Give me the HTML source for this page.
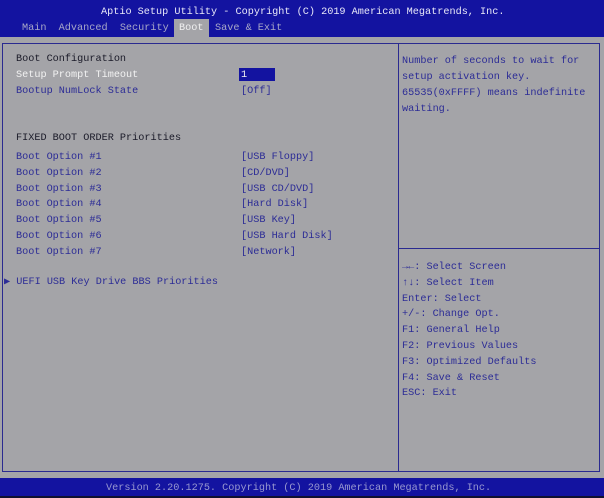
<!DOCTYPE html><html><head><style>
body{margin:0;width:604px;height:498px;background:#a4a4a8;position:relative;overflow:hidden;font-family:"Liberation Mono","DejaVu Sans Mono",monospace;font-size:10.2px;}
.t{position:absolute;white-space:pre;line-height:12px}
.b{color:#2c2c96}.k{color:#1a1a28}.w{color:#f2f2f2}
</style></head><body>
<div style="position:absolute;left:0;top:0;width:604px;height:37px;background:#1313a0"></div>
<div class="t" style="left:101px;top:7px;color:#e8e8f8">Aptio Setup Utility - Copyright (C) 2019 American Megatrends, Inc.</div>
<div class="t" style="left:22px;top:23px;color:#a8a8c8">Main  Advanced  Security</div>
<div style="position:absolute;left:174px;top:19px;width:35px;height:18px;background:#a4a4a8"></div>
<div class="t" style="left:179px;top:23px;color:#f0f0f0">Boot</div>
<div class="t" style="left:215px;top:23px;color:#a8a8c8">Save &amp; Exit</div>
<div style="position:absolute;left:2px;top:43px;width:596px;height:427px;border:1px solid #2a2a90"></div>
<div style="position:absolute;left:398px;top:43px;width:1px;height:428px;background:#2a2a90"></div>
<div style="position:absolute;left:399px;top:248px;width:200px;height:1px;background:#2a2a90"></div>
<div style="position:absolute;left:0;top:478px;width:604px;height:18px;background:#1313a0"></div>
<div style="position:absolute;left:0;top:496px;width:604px;height:2px;background:#101030"></div>
<div class="t" style="left:106px;top:483px;color:#9898d0">Version 2.20.1275. Copyright (C) 2019 American Megatrends, Inc.</div>
<div class="t k" style="left:16px;top:54px">Boot Configuration</div>
<div class="t w" style="left:16px;top:70px">Setup Prompt Timeout</div>
<div style="position:absolute;left:239px;top:68px;width:36px;height:13px;background:#1313a0"></div>
<div class="t w" style="left:241px;top:70px">1</div>
<div class="t b" style="left:16px;top:86px">Bootup NumLock State</div>
<div class="t b" style="left:241px;top:86px">[Off]</div>
<div class="t k" style="left:16px;top:133px">FIXED BOOT ORDER Priorities</div>
<div class="t b" style="left:16px;top:150px;line-height:15.75px">Boot Option #1
Boot Option #2
Boot Option #3
Boot Option #4
Boot Option #5
Boot Option #6
Boot Option #7</div>
<div class="t b" style="left:241px;top:150px;line-height:15.75px">[USB Floppy]
[CD/DVD]
[USB CD/DVD]
[Hard Disk]
[USB Key]
[USB Hard Disk]
[Network]</div>
<div class="t b" style="left:4px;top:277px">▶ UEFI USB Key Drive BBS Priorities</div>
<div class="t b" style="left:402px;top:54px;line-height:16px">Number of seconds to wait for
setup activation key.
65535(0xFFFF) means indefinite
waiting.</div>
<div class="t b" style="left:402px;top:260px;line-height:15.8px">→←: Select Screen
↑↓: Select Item
Enter: Select
+/-: Change Opt.
F1: General Help
F2: Previous Values
F3: Optimized Defaults
F4: Save &amp; Reset
ESC: Exit</div>
</body></html>
